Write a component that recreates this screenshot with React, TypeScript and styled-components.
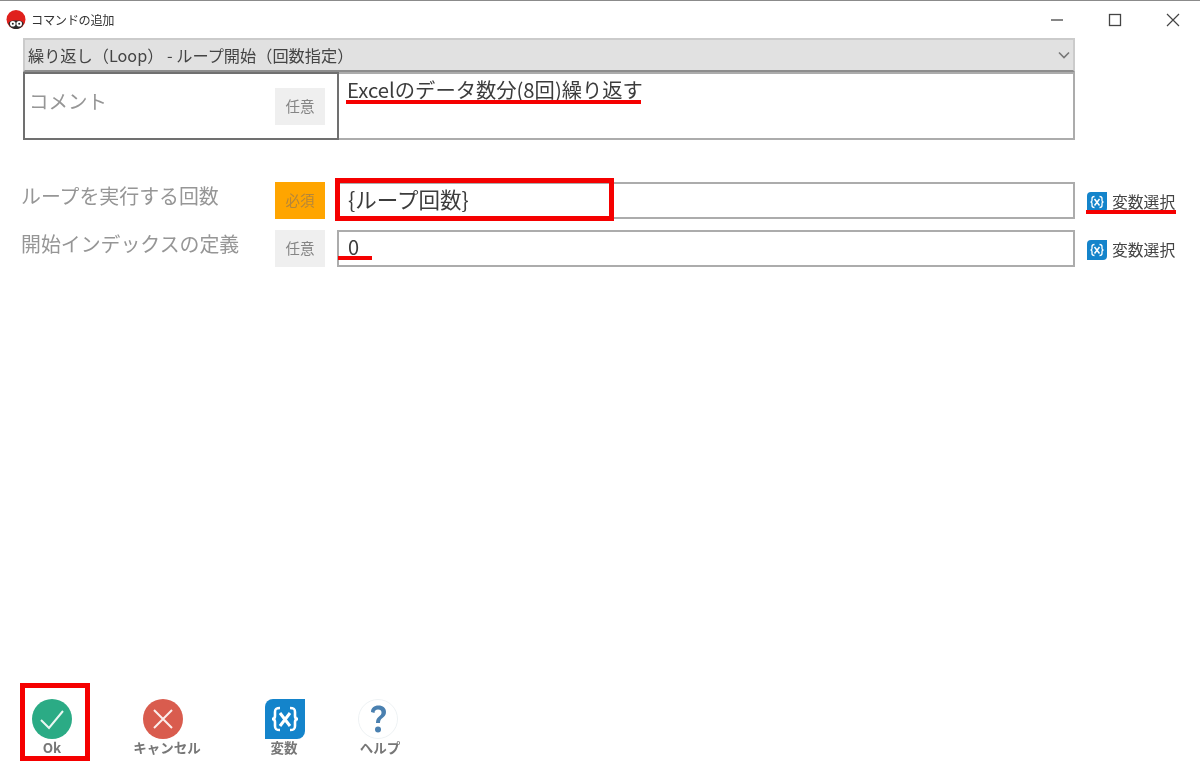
import React from "react";
import styled, { createGlobalStyle } from "styled-components";

const Global = createGlobalStyle`
  html, body { margin: 0; padding: 0; background: #fff; }
  body { font-family: "Noto Sans CJK JP", "Liberation Sans", sans-serif; }
`;

const Page = styled.div`
  width: 1200px;
  height: 761px;
  display: flex;
  flex-direction: column;
  overflow: hidden;
  position: relative;
  background: #fff;
  border-top: 1px solid #8b8b8b;
  box-sizing: border-box;
  filter: blur(0.35px);
`;

const TitleBar = styled.header`
  height: 37px;
  flex: none;
  display: flex;
  align-items: center;
  padding-left: 6px;
  gap: 5px;
  box-sizing: border-box;
`;

const TitleText = styled.span`
  font-size: 12.2px;
  color: #333;
  letter-spacing: -0.3px;
  flex: 1;
`;

const WinButtons = styled.div`
  display: flex;
  align-items: center;
  margin-right: -2px;
`;

const WinButton = styled.span`
  width: 58px;
  height: 20px;
  display: flex;
  align-items: center;
  justify-content: center;
`;

const Main = styled.main`
  display: flex;
  flex-direction: column;
  padding: 0 24px 0 23px;
`;

const Select = styled.div`
  width: 1052px;
  height: 34px;
  box-sizing: border-box;
  background: #e1e1e1;
  border: 2px solid #cbcbcb;
  border-bottom-color: #8d8d8d;
  display: flex;
  align-items: center;
  justify-content: space-between;
  padding: 0 3px;
  font-size: 16.2px;
  color: #444;
`;

const CommentRow = styled.div`
  width: 1052px;
  height: 68px;
  display: flex;
  margin-bottom: 42px;
`;

const CommentLabel = styled.div`
  width: 316px;
  flex: none;
  box-sizing: border-box;
  border: 2px solid #707070;
  display: flex;
  justify-content: space-between;
  padding: 14px 12px 0 4px;
`;

const LabelText = styled.span`
  font-size: 19.5px;
  line-height: 28px;
  margin-top: -1px;
  color: #969696;
`;

const Badge = styled.span<{ $required?: boolean }>`
  width: 50px;
  height: 37px;
  box-sizing: border-box;
  padding-bottom: 2px;
  flex: none;
  display: flex;
  align-items: center;
  justify-content: center;
  font-size: 14.5px;
  color: ${(p) => (p.$required ? "#b5863a" : "#858585")};
  background: ${(p) => (p.$required ? "#ffa500" : "#efefef")};
`;

const CommentInput = styled.div`
  flex: 1;
  position: relative;
  box-sizing: border-box;
  border: 2px solid #acacac;
  border-left: none;
  padding: 0 8px;
  font-size: 20.3px;
  line-height: 31px;
  color: #3c3c3c;
`;

const FieldRow = styled.div`
  display: grid;
  grid-template-columns: 252px 50px 750px 89px;
  height: 37px;
  margin-bottom: 11px;
`;

const FieldLabel = styled(LabelText)`
  font-size: 19.9px;
  margin-left: -2px;
  margin-top: 0;
  white-space: nowrap;
`;

const Field = styled.div<{ $small?: boolean }>`
  position: relative;
  margin-left: 12px;
  box-sizing: border-box;
  border: 2px solid #acacac;
  padding: 0 9px;
  font-size: ${(p) => (p.$small ? 20 : 21.5)}px;
  line-height: 30px;
  color: #3c3c3c;
`;

const VarLink = styled.div`
  position: relative;
  margin-left: 12px;
  width: 100px;
  display: flex;
  align-items: center;
  gap: 5px;
  font-size: 15.8px;
  color: #444;
  white-space: nowrap;
  padding-top: 2px;
`;

const Mark = styled.div<{ $left: number; $top: number; $width: number; $height: number }>`
  position: absolute;
  left: ${(p) => p.$left}px;
  top: ${(p) => p.$top}px;
  width: ${(p) => p.$width}px;
  height: ${(p) => p.$height}px;
  background: #f50000;
`;

const RedBox = styled.div<{ $left: number; $top: number; $width: number; $height: number }>`
  position: absolute;
  left: ${(p) => p.$left}px;
  top: ${(p) => p.$top}px;
  width: ${(p) => p.$width}px;
  height: ${(p) => p.$height}px;
  box-sizing: border-box;
  border: 5px solid #f50000;
`;

const Toolbar = styled.footer`
  margin-top: auto;
  position: relative;
  height: 62px;
  flex: none;
  display: grid;
  grid-template-columns: 115px 117px 96px 70px;
  padding-left: 17px;
`;

const ToolButton = styled.div`
  width: 70px;
  display: flex;
  flex-direction: column;
  align-items: center;
`;

const ToolIcon = styled.span<{ $shift?: number }>`
  height: 40px;
  display: block;
  transform: translateX(${(p) => p.$shift ?? 0}px);
`;

const ToolLabel = styled.span`
  font-size: 13.5px;
  line-height: 16px;
  font-weight: 700;
  color: #777;
  white-space: nowrap;
`;

const Logo = () => (
  <svg width="20" height="20" viewBox="0 0 20 20">
    <circle cx="10" cy="9.500" r="9.500" fill="#e0201c" />
    <path d="M2.500 13.500 C3 11 6 10.500 10 10.500 C14 10.500 17 11 17.500 13.500 C16.500 17.500 13.500 19 10 19 C6.500 19 3.500 17.500 2.500 13.500Z" fill="#2a2a2a" />
    <circle cx="6.800" cy="13.800" r="2.800" fill="#fff" />
    <circle cx="13.200" cy="13.800" r="2.800" fill="#fff" />
    <circle cx="6.800" cy="13.800" r="1" fill="#222" />
    <circle cx="13.200" cy="13.800" r="1" fill="#222" />
  </svg>
);

const Minimize = () => (
  <svg width="14" height="14" viewBox="0 0 14 14"><path d="M1 7h12" stroke="#444" strokeWidth="1.3" /></svg>
);
const Maximize = () => (
  <svg width="14" height="14" viewBox="0 0 14 14"><rect x="1.500" y="1.500" width="11" height="11" fill="none" stroke="#444" strokeWidth="1.3" /></svg>
);
const CloseIcon = () => (
  <svg width="14" height="14" viewBox="0 0 14 14"><path d="M1 1l12 12M13 1L1 13" stroke="#444" strokeWidth="1.2" /></svg>
);

const Chevron = () => (
  <svg width="12" height="8" viewBox="0 0 12 8">
    <path d="M1 1.500l5 5 5-5" fill="none" stroke="#777" strokeWidth="1.6" />
  </svg>
);

const VarIcon = ({ size }: { size: number }) => (
  <svg width={size} height={size} viewBox="0 0 40 40">
    <path d="M8 0H40V32a8 8 0 0 1-8 8H0V8a8 8 0 0 1 8-8Z" fill="#1484cb" />
    <path d="M15 9c-4 0-5 1-5 4v4c0 2-1 3-3 3 2 0 3 1 3 3v4c0 3 1 4 5 4M25 9c4 0 5 1 5 4v4c0 2 1 3 3 3-2 0-3 1-3 3v4c0 3-1 4-5 4" fill="none" stroke="#fff" strokeWidth="2.600" />
    <path d="M15 14l10 13M25 14L15 27" fill="none" stroke="#fff" strokeWidth="3" />
  </svg>
);

const OkIcon = () => (
  <svg width="40" height="40" viewBox="0 0 40 40">
    <circle cx="20" cy="20" r="20" fill="#2bab85" />
    <path d="M9 21l8 8L31 12" fill="none" stroke="#eaf7f2" strokeWidth="2" />
  </svg>
);

const CancelIcon = () => (
  <svg width="40" height="40" viewBox="0 0 40 40">
    <circle cx="20" cy="20" r="20" fill="#d95c4e" />
    <path d="M11 11l18 18M29 11L11 29" fill="none" stroke="#fbeeec" strokeWidth="2" />
  </svg>
);

const HelpIcon = () => (
  <svg width="40" height="40" viewBox="0 0 40 40">
    <circle cx="20" cy="20" r="19.500" fill="#fff" stroke="#eef2f4" strokeWidth="1" />
    <path d="M13 13c0-4 3-6.500 7.500-6.500S28 9 28 13c0 3-1.500 4.500-3.500 6-2 1.500-2.500 2.500-2.500 5h-4c0-3.500 1-5 3-6.500 1.700-1.300 2.500-2.300 2.500-4 0-1.700-1.200-3-3.500-3s-3.500 1.300-3.500 3.500Z" fill="#4a80b0" />
    <circle cx="20" cy="30.500" r="3" fill="#4a80b0" />
  </svg>
);

export default function App() {
  return (
    <Page>
      <Global />
      <TitleBar>
        <Logo />
        <TitleText>コマンドの追加</TitleText>
        <WinButtons>
          <WinButton><Minimize /></WinButton>
          <WinButton><Maximize /></WinButton>
          <WinButton><CloseIcon /></WinButton>
        </WinButtons>
      </TitleBar>
      <Main>
        <Select>
          <span>繰り返し（Loop） - ループ開始（回数指定）</span>
          <Chevron />
        </Select>
        <CommentRow>
          <CommentLabel>
            <LabelText>コメント</LabelText>
            <Badge>任意</Badge>
          </CommentLabel>
          <CommentInput>
            Excelのデータ数分(8回)繰り返す
            <Mark $left={7} $top={26} $width={295} $height={4} />
          </CommentInput>
        </CommentRow>
        <FieldRow>
          <FieldLabel>ループを実行する回数</FieldLabel>
          <Badge $required>必須</Badge>
          <Field>
            {"{ループ回数}"}
            <RedBox $left={-4} $top={-6} $width={279} $height={43} />
          </Field>
          <VarLink>
            <VarIcon size={20} />
            変数選択
            <Mark $left={-1} $top={28} $width={90} $height={4} />
          </VarLink>
        </FieldRow>
        <FieldRow>
          <FieldLabel>開始インデックスの定義</FieldLabel>
          <Badge>任意</Badge>
          <Field $small>
            0
            <Mark $left={-1} $top={24} $width={34} $height={4} />
          </Field>
          <VarLink>
            <VarIcon size={20} />
            変数選択
          </VarLink>
        </FieldRow>
      </Main>
      <Toolbar>
        <ToolButton>
          <ToolIcon><OkIcon /></ToolIcon>
          <ToolLabel>Ok</ToolLabel>
        </ToolButton>
        <ToolButton>
          <ToolIcon $shift={-4}><CancelIcon /></ToolIcon>
          <ToolLabel>キャンセル</ToolLabel>
        </ToolButton>
        <ToolButton>
          <ToolIcon $shift={1}><VarIcon size={40} /></ToolIcon>
          <ToolLabel>変数</ToolLabel>
        </ToolButton>
        <ToolButton>
          <ToolIcon $shift={-2}><HelpIcon /></ToolIcon>
          <ToolLabel>ヘルプ</ToolLabel>
        </ToolButton>
        <RedBox $left={20} $top={-16} $width={70} $height={78} />
      </Toolbar>
    </Page>
  );
}
